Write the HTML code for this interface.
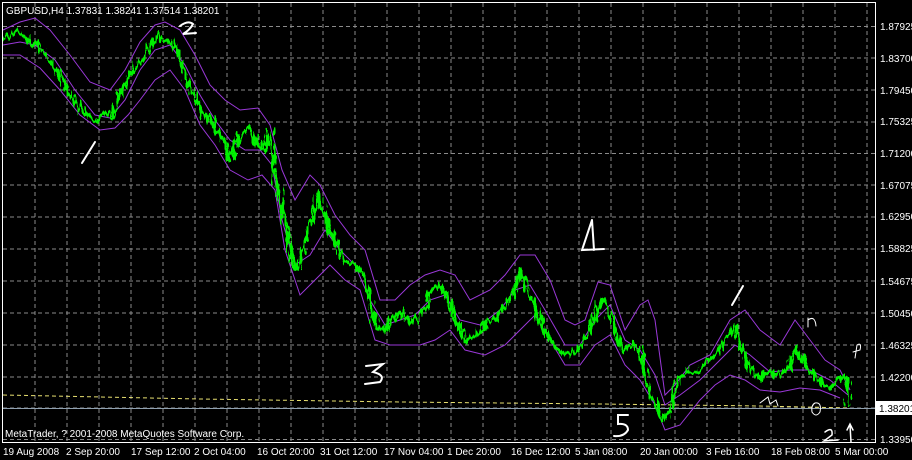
<!DOCTYPE html>
<html><head><meta charset="utf-8"><style>
body{margin:0;background:#000;width:912px;height:460px;overflow:hidden}
svg{display:block}
text{font-family:"Liberation Sans",sans-serif;font-size:10px;fill:#fff}
.h{fill:none;stroke:#fff;stroke-width:2}
</style></head><body>
<svg width="912" height="460" viewBox="0 0 912 460">
<defs>
<filter id="j" x="-5%" y="-10%" width="110%" height="120%">
<feTurbulence type="fractalNoise" baseFrequency="0.35 0.08" numOctaves="2" seed="3"/>
<feDisplacementMap in="SourceGraphic" scale="14" xChannelSelector="R" yChannelSelector="G"/>
</filter>
</defs>
<rect width="912" height="460" fill="#000"/>
<g stroke="#8a8a8a" stroke-width="1" stroke-dasharray="4,3">
<path d="M35 3V443M67 3V443M99 3V443M131 3V443M163 3V443M195 3V443M227 3V443M259 3V443M291 3V443M323 3V443M355 3V443M387 3V443M419 3V443M451 3V443M483 3V443M515 3V443M547 3V443M579 3V443M611 3V443M643 3V443M675 3V443M707 3V443M739 3V443M771 3V443M803 3V443M835 3V443M867 3V443"/>
<path d="M3 26.5H875M3 58H875M3 90H875M3 122H875M3 153.5H875M3 185H875M3 217H875M3 249H875M3 281H875M3 313H875M3 345H875M3 377H875M3 408H875M3 439.5H875"/>
</g>
<polyline fill="none" stroke="#e8e070" stroke-width="1" stroke-dasharray="4,3" points="3,395 200,399 400,402 600,404 760,406 850,408"/>
<line x1="3" y1="408.5" x2="875" y2="408.5" stroke="#8fa0b0" stroke-width="1"/>
<g fill="none" stroke="#9a38d8" stroke-width="1">
<polyline points="3,30 20,22 35,18 50,30 70,55 90,82 110,90 125,70 140,42 155,25 165,22 180,30 195,55 210,85 225,100 240,110 258,108 270,125 282,170 295,200 310,175 320,185 335,215 350,235 365,250 380,300 395,300 410,285 425,275 440,270 455,275 470,300 490,290 505,275 520,255 535,255 550,280 565,320 575,325 585,320 598,282 610,285 625,330 640,305 648,300 655,320 665,395 675,385 690,365 710,355 730,320 745,310 760,330 780,345 795,320 810,340 825,360 840,370 850,390"/>
<polyline points="3,45 20,42 35,45 55,60 75,90 95,115 110,118 125,100 140,70 155,50 170,45 185,65 200,95 215,120 230,140 245,150 260,150 272,165 282,220 295,265 310,255 325,230 340,250 355,265 370,300 385,325 400,320 415,315 430,300 445,295 460,320 480,325 500,310 515,290 530,285 545,310 565,345 580,345 595,320 610,305 625,340 640,350 655,375 665,405 680,395 700,380 720,360 735,345 750,355 770,372 790,370 810,370 830,380 848,395"/>
<polyline points="3,55 20,55 40,68 60,90 80,115 100,130 115,128 128,115 140,100 155,80 170,70 185,90 200,125 215,145 230,170 248,180 262,175 275,190 285,250 300,295 315,280 330,265 345,280 360,290 375,340 390,345 405,345 420,345 435,340 450,330 465,350 485,355 505,345 520,330 535,315 550,340 565,365 580,365 595,345 610,335 625,365 640,380 655,405 665,430 680,425 700,400 715,385 730,375 745,380 760,390 780,392 800,388 820,390 840,398"/>
</g>
<g filter="url(#j)">
<polyline fill="none" stroke="#00f000" stroke-width="4" stroke-linejoin="round" points="5,38 12,34 20,32 28,40 38,46 48,58 58,72 68,90 78,105 88,118 98,120 105,112 112,118 120,95 128,78 135,68 145,55 152,42 158,36 165,42 172,40 180,55 186,80 194,95 202,112 210,120 218,132 224,140 230,160 236,140 242,135 250,128 256,142 264,150 270,130 276,180 282,210 288,235 295,270 300,262 306,240 312,215 318,195 324,215 330,230 338,248 346,262 354,265 362,270 370,300 376,325 384,332 392,320 400,312 408,322 416,320 424,308 432,290 440,285 448,300 458,325 466,342 476,335 486,322 496,318 506,305 514,290 520,272 526,285 534,305 542,325 550,340 560,352 570,355 580,348 590,330 598,305 604,298 610,318 616,330 622,350 632,345 640,350 646,380 652,398 658,410 664,420 670,410 678,382 688,370 698,372 708,360 718,352 728,335 735,325 742,352 750,368 758,378 768,372 778,375 788,368 796,350 804,362 812,372 820,382 830,388 840,378 846,378 850,408"/>
</g>
<rect x="2.5" y="2.5" width="873" height="440" fill="none" stroke="#fff" stroke-width="1"/>
<text x="6" y="14">GBPUSD,H4  1.37831 1.38241 1.37514 1.38201</text>
<text x="5" y="437">MetaTrader, ? 2001-2008 MetaQuotes Software Corp.</text>
<g>
<text x="880" y="30">1.87925</text><text x="880" y="62">1.83700</text><text x="880" y="94">1.79450</text><text x="880" y="125">1.75325</text><text x="880" y="157">1.71200</text><text x="880" y="189">1.67075</text><text x="880" y="220">1.62950</text><text x="880" y="252">1.58825</text><text x="880" y="285">1.54675</text><text x="880" y="317">1.50450</text><text x="880" y="349">1.46325</text><text x="880" y="381">1.42200</text><text x="880" y="443">1.33950</text>
</g>
<rect x="876" y="401" width="36" height="14" fill="#fff"/>
<text x="879" y="412" style="fill:#000">1.38201</text>
<g>
<text x="3" y="455">19 Aug 2008</text><text x="66" y="455">2 Sep 20:00</text><text x="131" y="455">17 Sep 12:00</text><text x="194" y="455">2 Oct 04:00</text><text x="257" y="455">16 Oct 20:00</text><text x="320" y="455">31 Oct 12:00</text><text x="384" y="455">17 Nov 04:00</text><text x="447" y="455">1 Dec 20:00</text><text x="511" y="455">16 Dec 12:00</text><text x="575" y="455">5 Jan 08:00</text><text x="640" y="455">20 Jan 00:00</text><text x="706" y="455">3 Feb 16:00</text><text x="771" y="455">18 Feb 08:00</text><text x="835" y="455">5 Mar 00:00</text>
</g>
<g class="h" stroke-linecap="round">
<path d="M82 163L95 142"/>
<path d="M180 26Q188 20 193 24Q190 30 183 34L196 33"/>
<path d="M366 366L383 364L373 372Q386 375 380 382L365 384"/>
<path d="M592 220L582 250L604 249M592 220L594 250"/>
<path d="M628 415L618 415L618 424Q628 423 628 430Q624 437 614 436"/>
<path d="M732 305L743 286"/>
<path d="M808 318L808 327M808 320Q815 315 816 326" stroke-width="1"/>
<path d="M855 358L857 345Q862 342 860 350L853 352" stroke-width="1"/>
<path d="M760 403L768 397L770 404L776 400L778 406" stroke-width="1"/>
<path d="M815 403Q822 402 820 412Q816 418 812 412Q811 405 815 403" stroke-width="1"/>
<path d="M825 432Q833 426 832 435L824 441L838 440" stroke-width="1.5"/>
<path d="M851 442L850 425M847 430L850 424L853 430" stroke-width="1.5"/>
</g>
</svg>
</body></html>
